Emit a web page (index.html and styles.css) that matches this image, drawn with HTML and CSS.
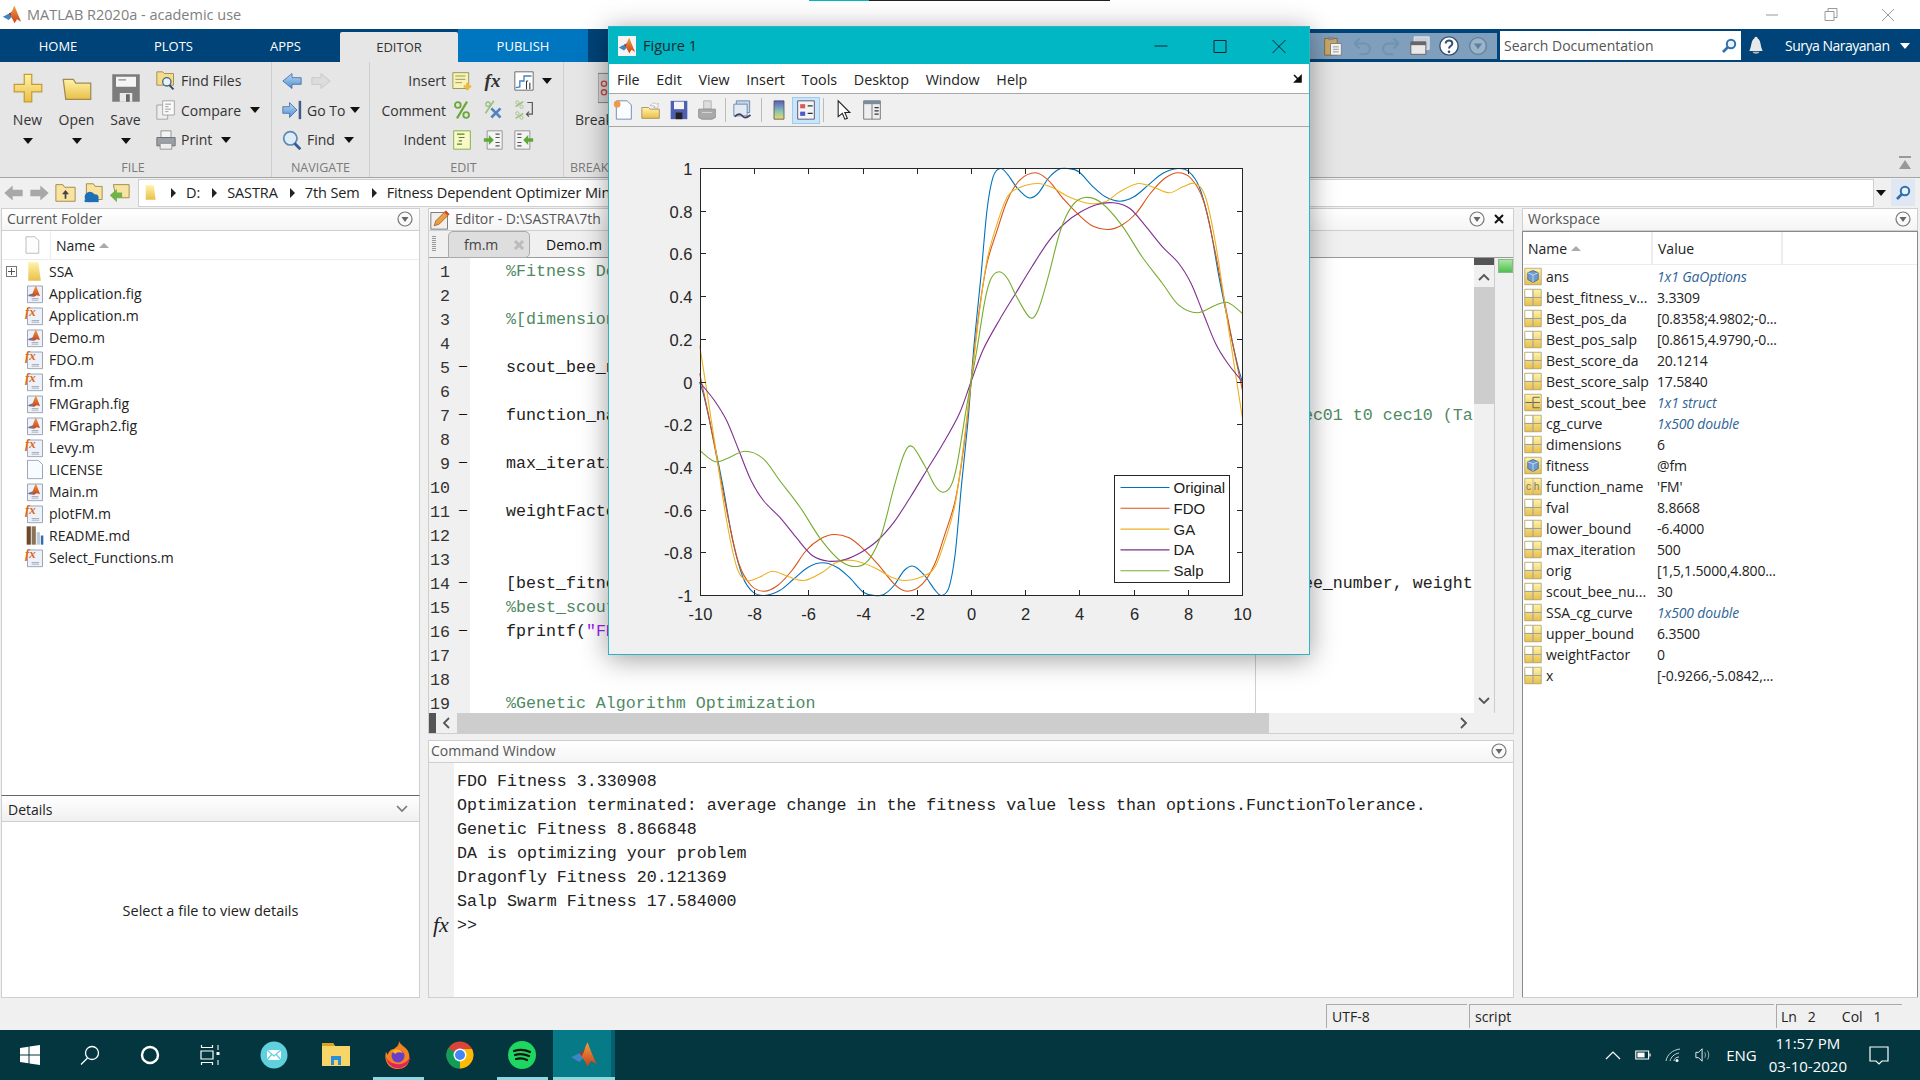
FILE: index.html
```html
<!DOCTYPE html>
<html>

<head>
    <title>MATLAB R2020a - academic use</title>
    <link rel="stylesheet" href="styles.css">
</head>

<body>
    <svg class="sprites" width="0" height="0">
        <defs>
            <linearGradient id="gradYellow" x1="0" y1="0" x2="0" y2="1">
                <stop offset="0" stop-color="#fff3a8" />
                <stop offset="1" stop-color="#e9bf4a" />
            </linearGradient>
            <linearGradient id="gradBlue" x1="0" y1="0" x2="0" y2="1">
                <stop offset="0" stop-color="#bcd8f4" />
                <stop offset="1" stop-color="#4f8fd0" />
            </linearGradient>
            <linearGradient id="gradMl" x1="0" y1="0" x2="0" y2="1">
                <stop offset="0" stop-color="#f0a040" />
                <stop offset="1" stop-color="#c8401a" />
            </linearGradient>
        </defs>
        <symbol id="ml" viewBox="0 0 24 24">
            <path d="M1 14l6-3 3-1 3 3-5 5z" fill="#3f84c4" />
            <path d="M15 1c2 5 5 13 8 19l-5-3-3 5c-1-3-3-6-5-9 2-3 3-9 5-12z" fill="url(#gradMl)" />
            <path d="M15 1c-2 3-3 9-5 12l-2-3 3-1c2-3 3-6 4-8z" fill="#a83818" />
        </symbol>
        <symbol id="plus" viewBox="0 0 24 24">
            <path d="M9 1h6v8h8v6h-8v8H9v-8H1V9h8z" fill="url(#gradYellow)" stroke="#c99a30" />
        </symbol>
        <symbol id="open" viewBox="0 0 24 24">
            <path d="M1 5h8l2 3h12v13H3z" fill="url(#gradYellow)" stroke="#a08a50" />
        </symbol>
        <symbol id="floppy" viewBox="0 0 24 24">
            <path d="M1 1h22v22H1z" fill="#7c7c7c" />
            <path d="M4 3h16v8H4z" fill="#f4f4f4" />
            <path d="M7 16h10v7H7z" fill="#e8e8e8" />
            <path d="M12 17h3v6h-3z" fill="#666" />
            <path d="M6 5h6v1H6z" fill="#888" />
        </symbol>
        <symbol id="findfiles" viewBox="0 0 24 24">
            <path d="M1 1h7l2 2h11v14H1z" fill="#f5dc8c" stroke="#9a8240" />
            <circle cx="13" cy="13" r="5" fill="#e8f2fb" stroke="#44678a" stroke-width="1.6" />
            <path d="M16 17l5 5" stroke="#2f4a68" stroke-width="2.4" />
        </symbol>
        <symbol id="compare" viewBox="0 0 24 24">
            <path d="M1 6h13v17H1z" fill="#eee" stroke="#999" />
            <path d="M8 1h14v17H8z" fill="#fafafa" stroke="#999" />
            <path d="M11 5h7M11 8h4M11 11h7M11 14h4" stroke="#888" />
        </symbol>
        <symbol id="printer" viewBox="0 0 24 24">
            <path d="M6 1h12v8H6z" fill="#f4f4f4" stroke="#888" />
            <path d="M1 9h22v10H1z" fill="#9aa0a8" stroke="#666" />
            <path d="M5 16h14v7H5z" fill="#eee" stroke="#888" />
        </symbol>
        <symbol id="back" viewBox="0 0 24 24">
            <path d="M1 12L12 3v5h11v8H12v5z" fill="url(#gradBlue)" stroke="#3f6fa8" />
        </symbol>
        <symbol id="fwdoff" viewBox="0 0 24 24">
            <path d="M23 12L12 3v5H1v8h11v5z" fill="#dcdcdc" stroke="#c4c4c4" />
        </symbol>
        <symbol id="goto" viewBox="0 0 24 24">
            <path d="M1 8h8V3l9 9-9 9v-5H1z" fill="url(#gradBlue)" stroke="#3f6fa8" />
            <path d="M20 1h3v22h-3z" fill="#3d5f8a" />
        </symbol>
        <symbol id="find" viewBox="0 0 24 24">
            <circle cx="10" cy="10" r="8" fill="#dcecfb" stroke="#5d88b4" stroke-width="2" />
            <path d="M15 16l7 7" stroke="#2f5f96" stroke-width="3.4" />
        </symbol>
        <symbol id="insert" viewBox="0 0 24 24">
            <path d="M1 2h19v19H1z" fill="#fbf1b4" stroke="#7d8f4e" />
            <path d="M4 6h12M4 10h12M4 14h8" stroke="#7d8f4e" />
            <path d="M17 14h3v3h3v3h-3v3h-3v-3h-3v-3h3z" fill="#ecb93a" />
        </symbol>
        <symbol id="fi" viewBox="0 0 24 24">
            <path d="M1 1h22v22H1z" fill="#fff" stroke="#555" />
            <path d="M2 20l5-1V12h5V6h9" fill="none" stroke="#3f84c4" stroke-width="1.6" />
            <path d="M15 12h2M15 12v10M19 14v8" stroke="#333" stroke-width="1.3" />
        </symbol>
        <symbol id="pctmark" viewBox="0 0 24 24">
            <circle cx="7" cy="6" r="3.4" fill="none" stroke="#6aa83a" stroke-width="2.2" />
            <circle cx="17" cy="18" r="3.4" fill="none" stroke="#6aa83a" stroke-width="2.2" />
            <path d="M18 2L6 22" stroke="#6aa83a" stroke-width="2.6" />
        </symbol>
        <symbol id="pctx" viewBox="0 0 24 24">
            <circle cx="6" cy="5" r="2.6" fill="none" stroke="#9cc080" stroke-width="1.6" />
            <path d="M13 1L3 16" stroke="#9cc080" stroke-width="2" />
            <path d="M10 10l11 11M21 10L10 21" stroke="#4f86c0" stroke-width="3.2" />
        </symbol>
        <symbol id="pctback" viewBox="0 0 24 24">
            <path d="M2 8l9-6M2 22l9-6" stroke="#9cc080" stroke-width="2" />
            <circle cx="4" cy="3" r="2" fill="none" stroke="#9cc080" />
            <circle cx="9" cy="8" r="2" fill="none" stroke="#9cc080" />
            <circle cx="4" cy="16" r="2" fill="none" stroke="#9cc080" />
            <circle cx="9" cy="21" r="2" fill="none" stroke="#9cc080" />
            <path d="M16 3h6v14h-7m3-3l-3 3 3 3" fill="none" stroke="#555" stroke-width="1.4" />
        </symbol>
        <symbol id="indent" viewBox="0 0 24 24">
            <path d="M2 1h20v22H2z" fill="#fbf7c8" stroke="#6aa83a" />
            <path d="M6 5h9M8 9h7M8 13h4M6 17h6" stroke="#4f8a2a" stroke-width="1.4" />
        </symbol>
        <symbol id="indentin" viewBox="0 0 24 24">
            <path d="M5 1h18v22H5z" fill="#f4f4f4" stroke="#888" />
            <path d="M15 5h5M15 9h5M15 15h5M15 19h5" stroke="#555" stroke-width="1.4" />
            <path d="M1 10h6V6l6 6-6 6v-4H1z" fill="#5ea83a" />
        </symbol>
        <symbol id="indentout" viewBox="0 0 24 24">
            <path d="M1 1h18v22H1z" fill="#f4f4f4" stroke="#888" />
            <path d="M4 5h5M4 9h5M4 15h5M4 19h5" stroke="#555" stroke-width="1.4" />
            <path d="M23 10h-6V6l-6 6 6 6v-4h6z" fill="#5ea83a" />
        </symbol>
        <symbol id="breakpt" viewBox="0 0 14 34">
            <path d="M0 0h14v34H0z" fill="#d4d4d4" stroke="#777" />
            <circle cx="7" cy="12" r="3" fill="none" stroke="#c44" stroke-width="1.6" />
            <circle cx="7" cy="22" r="3" fill="none" stroke="#c44" stroke-width="1.6" />
        </symbol>
        <symbol id="navback" viewBox="0 0 24 24">
            <path d="M1 12l10-9v5h12v8H11v5z" fill="#a8a8a8" />
        </symbol>
        <symbol id="navfwd" viewBox="0 0 24 24">
            <path d="M23 12L13 3v5H1v8h12v5z" fill="#a8a8a8" />
        </symbol>
        <symbol id="upfolder" viewBox="0 0 24 24">
            <path d="M1 3h8l2 3h12v16H1z" fill="#f8e4a0" stroke="#9a8240" />
            <path d="M12 9l4 5h-3v5h-2v-5H8z" fill="#444" />
        </symbol>
        <symbol id="browse" viewBox="0 0 24 24">
            <path d="M5 2h8l2 3h8v15H5z" fill="#f8e4a0" stroke="#9a8240" />
            <circle cx="9" cy="17" r="6" fill="#1f6fb2" />
            <circle cx="15" cy="18" r="4" fill="#1f6fb2" />
            <path d="M3 20h16v3H3z" fill="#1f6fb2" />
        </symbol>
        <symbol id="pickfolder" viewBox="0 0 24 24">
            <path d="M5 3h18v15H8z" fill="#f8e4a0" stroke="#9a8240" />
            <path d="M1 15l8-7v4h6v6H9v5z" fill="#6fb34a" />
        </symbol>
        <symbol id="tfolder" viewBox="0 0 24 24">
            <path d="M4 1h12l3 22H4z" fill="url(#gradYellow)" />
        </symbol>
        <symbol id="figdoc" viewBox="0 0 24 24">
            <path d="M3 3h18v20H3z" fill="#eef2f8" stroke="#8796ad" />
            <path d="M3 15l6-3 4-10 5 13-4-1-3 2z" fill="url(#gradMl)" />
            <path d="M3 14l6-2 1 3z" fill="#3f84c4" />
            <path d="M8 18h8M8 20h8" stroke="#9aa4b2" />
        </symbol>
        <symbol id="fxdoc" viewBox="0 0 24 24">
            <path d="M3 3h18v20H3z" fill="#eef2f8" stroke="#8796ad" />
            <path d="M8 18h9M8 20h9" stroke="#9aa4b2" />
        </symbol>
        <symbol id="plaindoc" viewBox="0 0 24 24">
            <path d="M3 1h13l5 5v17H3z" fill="#f8fbff" stroke="#8796ad" />
        </symbol>
        <symbol id="headdoc" viewBox="0 0 24 24">
            <path d="M4 1h12l5 5v17H4z" fill="#fdfdfd" stroke="#aaa" />
        </symbol>
        <symbol id="books" viewBox="0 0 24 24">
            <path d="M2 1h5v22H2z" fill="#6a4a2a" />
            <path d="M8 1h5v22H8z" fill="#8a7458" />
            <path d="M14 8h4v15h-4z" fill="#c0c8d4" />
            <path d="M19 12h3v11h-3z" fill="#2f6fb0" />
        </symbol>
        <symbol id="vargrid" viewBox="0 0 24 24">
            <path d="M1 1h22v22H1z" fill="url(#gradYellow)" stroke="#a09a70" />
            <path d="M2 2h9v9H2z" fill="#fff" />
            <path d="M12 1v22M1 12h22" stroke="#9aa0a8" stroke-width="1.4" />
        </symbol>
        <symbol id="varcube" viewBox="0 0 24 24">
            <path d="M1 1h22v22H1z" fill="url(#gradYellow)" stroke="#a09a70" />
            <path d="M12 4l7 3v9l-7 4-7-4V7z" fill="#6f9bd0" stroke="#3a5f8e" />
            <path d="M5 7l7 3 7-3M12 10v10" fill="none" stroke="#dce8f5" />
        </symbol>
        <symbol id="varstruct" viewBox="0 0 24 24">
            <path d="M1 1h22v22H1z" fill="url(#gradYellow)" stroke="#a09a70" />
            <path d="M2 12h9M12 5h9M12 12h9M12 19h9M12 5v14" fill="none" stroke="#666" stroke-width="1.4" />
        </symbol>
        <symbol id="varchar" viewBox="0 0 24 24">
            <path d="M1 1h22v22H1z" fill="url(#gradYellow)" stroke="#a09a70" />
            <path d="M12 1v22" stroke="#aaa" />
        </symbol>
        <symbol id="minibtn" viewBox="0 0 16 16">
            <circle cx="8" cy="8" r="7" fill="#fafafa" stroke="#777" stroke-width="1.2" />
            <path d="M4.5 6h7L8 11z" fill="#666" />
        </symbol>
        <symbol id="lens" viewBox="0 0 16 16">
            <circle cx="10" cy="6" r="4.2" fill="#e8f2fb" stroke="#2f6fb0" stroke-width="2" />
            <path d="M7 9l-5 5" stroke="#2f6fb0" stroke-width="2.6" />
        </symbol>
        <symbol id="tbnew" viewBox="0 0 24 24">
            <path d="M4 1h13l5 5v17H4z" fill="#fbfcff" stroke="#5a7ea6" />
            <circle cx="5" cy="5" r="4" fill="#ef9a4a" />
        </symbol>
        <symbol id="tbopen" viewBox="0 0 24 24">
            <path d="M1 9h8l2 2h11v11H1z" fill="url(#gradYellow)" stroke="#a08a50" />
            <path d="M11 7c2-4 6-4 8-2l2-1-1 6-5-1 2-1c-2-2-4-1-6-1z" fill="#f6f6f6" stroke="#999" stroke-width=".6" />
        </symbol>
        <symbol id="tbsave" viewBox="0 0 24 24">
            <path d="M2 1h20v22H2z" fill="#4f5fb0" />
            <path d="M6 2h12v9H6z" fill="#f4f4f4" />
            <path d="M8 15h8v8H8z" fill="#222" />
        </symbol>
        <symbol id="tbprint" viewBox="0 0 24 24">
            <path d="M8 1h9v10H8z" fill="#ddd" stroke="#aaa" />
            <path d="M2 11h20v10l-4 2H6l-4-2z" fill="#aaa" stroke="#888" />
            <path d="M6 15h12" stroke="#ddd" />
        </symbol>
        <symbol id="tblink" viewBox="0 0 24 24">
            <path d="M4 1h16v14H4z" fill="#c8d4e4" stroke="#5a7ea6" />
            <path d="M1 5h16v14H1z" fill="#e4eaf2" stroke="#5a7ea6" />
            <path d="M2 20c4-4 7-4 9-1s5 3 10-1" fill="none" stroke="#446" stroke-width="2" />
        </symbol>
        <symbol id="tbcolorbar" viewBox="0 0 24 24">
            <linearGradient id="gradBar" x1="0" y1="0" x2="0" y2="1">
                <stop offset="0" stop-color="#5a5ac8" />
                <stop offset=".6" stop-color="#8ac8b0" />
                <stop offset="1" stop-color="#f0d860" />
            </linearGradient>
            <path d="M6 1h12v22H6z" fill="url(#gradBar)" stroke="#555" />
        </symbol>
        <symbol id="tblegend" viewBox="0 0 24 24">
            <path d="M2 1h20v22H2z" fill="#f4f4f4" stroke="#446" />
            <path d="M5 5h6v5H5z" fill="#d85a5a" />
            <path d="M5 14h6v5H5z" fill="#4a5ac8" />
            <path d="M14 7h6M14 16h6" stroke="#333" stroke-width="1.6" />
        </symbol>
        <symbol id="tbcursor" viewBox="0 0 24 24">
            <path d="M5 1v19l5-4 3 7 3-1-3-7h6z" fill="#fff" stroke="#222" stroke-width="1.3" />
        </symbol>
        <symbol id="tbpanel" viewBox="0 0 24 24">
            <path d="M2 1h20v22H2z" fill="#eee" stroke="#666" />
            <path d="M2 1h20v4H2z" fill="#7a8ca0" />
            <path d="M12 5v18" stroke="#666" />
            <path d="M15 9h5M15 13h5M15 17h5" stroke="#333" stroke-width="1.5" />
        </symbol>
        <symbol id="clipboard" viewBox="0 0 24 24">
            <path d="M2 3h15v20H2z" fill="#c8a868" stroke="#7a6430" />
            <path d="M6 1h7v4H6z" fill="#888" />
            <path d="M9 9h13v14H9z" fill="#f4f4f4" stroke="#777" />
            <path d="M12 13h7M12 16h7M12 19h7" stroke="#888" />
        </symbol>
        <symbol id="undo" viewBox="0 0 24 24">
            <path d="M3 9h12a6 6 0 0 1 0 13H9M3 9l6-6M3 9l6 6" fill="none" stroke="#6f93b2" stroke-width="2.4" />
        </symbol>
        <symbol id="redo" viewBox="0 0 24 24">
            <path d="M21 9H9a6 6 0 0 0 0 13h6M21 9l-6-6M21 9l-6 6" fill="none" stroke="#6f93b2" stroke-width="2.4" />
        </symbol>
        <symbol id="windows" viewBox="0 0 24 24">
            <path d="M5 1h18v15H5z" fill="#c8d0da" stroke="#eee" />
            <path d="M1 7h18v15H1z" fill="#e8e8e8" stroke="#555" />
            <path d="M1 7h18v4H1z" fill="#666" />
        </symbol>
        <symbol id="helpq" viewBox="0 0 24 24">
            <circle cx="12" cy="12" r="11" fill="#fff" stroke="#33506e" stroke-width="1.6" />
            <path d="M8 9c0-5 8-5 8 0 0 3-4 3-4 6" fill="none" stroke="#33506e" stroke-width="2.4" />
            <circle cx="12" cy="19" r="1.6" fill="#33506e" />
        </symbol>
        <symbol id="qadown" viewBox="0 0 24 24">
            <circle cx="12" cy="12" r="10" fill="#9cb4ca" stroke="#5f7f9e" stroke-width="1.6" />
            <path d="M7 9h10l-5 7z" fill="#5f7f9e" />
        </symbol>
        <symbol id="bell" viewBox="0 0 24 24">
            <path d="M12 1c1 0 2 1 2 2 4 2 3 9 6 15H4c3-6 2-13 6-15 0-1 1-2 2-2z" fill="#e8e8e8" />
            <path d="M8 19h8c0 3-8 3-8 0z" fill="#bbb" />
        </symbol>
    </svg>

    <div class="sliver"><span class="sliver-teal"></span><span class="sliver-dark"></span></div>

    <div class="titlebar">
        <svg class="title-logo"><use href="#ml" /></svg>
        <span class="title-text">MATLAB R2020a - academic use</span>
        <div class="win-btns">
            <svg class="win-btn" viewBox="0 0 58 20"><path d="M23 10h12" stroke="#999" /></svg>
            <svg class="win-btn" viewBox="0 0 58 20"><path d="M24 6.500h9v9h-9zM27 6.500v-3h9v9h-3" fill="none" stroke="#999" /></svg>
            <svg class="win-btn" viewBox="0 0 58 20"><path d="M23 4l12 12M35 4L23 16" stroke="#999" /></svg>
        </div>
    </div>

    <div class="tabbar">
        <div class="tab tab-home">HOME</div>
        <div class="tab tab-plots">PLOTS</div>
        <div class="tab tab-apps">APPS</div>
        <div class="tab tab-editor">EDITOR</div>
        <div class="tab tab-publish">PUBLISH</div>
        <div class="quick">
            <svg class="qa"><use href="#clipboard" /></svg>
            <svg class="qa"><use href="#undo" /></svg>
            <svg class="qa"><use href="#redo" /></svg>
            <svg class="qa"><use href="#windows" /></svg>
            <svg class="qa"><use href="#helpq" /></svg>
            <svg class="qa"><use href="#qadown" /></svg>
        </div>
        <div class="search-doc">
            <span>Search Documentation</span>
            <svg class="lens"><use href="#lens" /></svg>
        </div>
        <svg class="bell"><use href="#bell" /></svg>
        <div class="account">Surya Narayanan</div>
        <span class="caret caret-white"></span>
    </div>

    <div class="ribbon">
        <section class="rib-sec sec-file">
            <div class="sec-body">
                <div class="big-btn"><svg class="big-icon"><use href="#plus" /></svg><span class="big-label">New</span><span class="caret"></span></div>
                <div class="big-btn"><svg class="big-icon"><use href="#open" /></svg><span class="big-label">Open</span><span class="caret"></span></div>
                <div class="big-btn"><svg class="big-icon"><use href="#floppy" /></svg><span class="big-label">Save</span><span class="caret"></span></div>
                <div class="rib-rows file-rows">
                    <div class="rib-row"><svg class="rib-icon"><use href="#findfiles" /></svg><span>Find Files</span></div>
                    <div class="rib-row"><svg class="rib-icon"><use href="#compare" /></svg><span>Compare</span><span class="caret caret-gap"></span></div>
                    <div class="rib-row"><svg class="rib-icon"><use href="#printer" /></svg><span>Print</span><span class="caret caret-gap"></span></div>
                </div>
            </div>
            <div class="sec-label">FILE</div>
        </section>
        <section class="rib-sec sec-nav">
            <div class="sec-body">
                <div class="rib-rows">
                    <div class="rib-row"><svg class="rib-icon"><use href="#back" /></svg><svg class="rib-icon fwd-icon"><use href="#fwdoff" /></svg></div>
                    <div class="rib-row"><svg class="rib-icon"><use href="#goto" /></svg><span>Go To</span><span class="caret"></span></div>
                    <div class="rib-row"><svg class="rib-icon"><use href="#find" /></svg><span>Find</span><span class="caret caret-gap"></span></div>
                </div>
            </div>
            <div class="sec-label">NAVIGATE</div>
        </section>
        <section class="rib-sec sec-edit">
            <div class="sec-body">
                <div class="edit-grid">
                    <span class="edit-label">Insert</span>
                    <svg class="rib-icon"><use href="#insert" /></svg>
                    <span class="fx-glyph">fx</span>
                    <svg class="rib-icon"><use href="#fi" /></svg>
                    <span class="caret"></span>
                    <span class="edit-label">Comment</span>
                    <svg class="rib-icon"><use href="#pctmark" /></svg>
                    <svg class="rib-icon"><use href="#pctx" /></svg>
                    <svg class="rib-icon"><use href="#pctback" /></svg>
                    <span></span>
                    <span class="edit-label">Indent</span>
                    <svg class="rib-icon"><use href="#indent" /></svg>
                    <svg class="rib-icon"><use href="#indentin" /></svg>
                    <svg class="rib-icon"><use href="#indentout" /></svg>
                    <span></span>
                </div>
            </div>
            <div class="sec-label">EDIT</div>
        </section>
        <section class="rib-sec sec-break">
            <div class="sec-body">
                <div class="big-btn break-btn"><svg class="break-icon"><use href="#breakpt" /></svg><span class="big-label">Break</span></div>
            </div>
            <div class="sec-label break-label">BREAK</div>
        </section>
        <svg class="collapse" viewBox="0 0 14 16"><path d="M1 1h12v2H1zM7 5l6 9H1z" fill="#999" /></svg>
    </div>

    <div class="addressbar">
        <svg class="nav-arrow"><use href="#navback" /></svg>
        <svg class="nav-arrow"><use href="#navfwd" /></svg>
        <svg class="nav-folder"><use href="#upfolder" /></svg>
        <svg class="nav-folder"><use href="#browse" /></svg>
        <svg class="nav-folder"><use href="#pickfolder" /></svg>
        <div class="pathbox">
            <svg class="path-folder"><use href="#tfolder" /></svg>
            <span class="path-sep"></span><span>D:</span>
            <span class="path-sep"></span><span>SASTRA</span>
            <span class="path-sep"></span><span>7th Sem</span>
            <span class="path-sep"></span><span>Fitness Dependent Optimizer Minimal</span>
        </div>
        <span class="caret path-caret"></span>
        <div class="path-search"><svg class="lens"><use href="#lens" /></svg></div>
    </div>

    <main class="desktop">
        <div class="col-left">
            <div class="panel folder-panel">
                <div class="panel-head"><span>Current Folder</span><svg class="mini"><use href="#minibtn" /></svg></div>
                <div class="folder-head">
                    <div class="fh-icon"><svg class="doc-head"><use href="#headdoc" /></svg></div>
                    <div class="fh-name">Name <span class="sort-up"></span></div>
                </div>
                <div class="file-list">
                    <div class="file-row"><span class="tree-col"><span class="plus-box"></span></span><svg class="file-icon"><use href="#tfolder" /></svg>SSA</div>
                    <div class="file-row"><span class="tree-col"></span><svg class="file-icon"><use href="#figdoc" /></svg>Application.fig</div>
                    <div class="file-row"><span class="tree-col"></span><span class="fx-file"><svg class="file-icon"><use href="#fxdoc" /></svg></span>Application.m</div>
                    <div class="file-row"><span class="tree-col"></span><svg class="file-icon"><use href="#figdoc" /></svg>Demo.m</div>
                    <div class="file-row"><span class="tree-col"></span><span class="fx-file"><svg class="file-icon"><use href="#fxdoc" /></svg></span>FDO.m</div>
                    <div class="file-row"><span class="tree-col"></span><span class="fx-file"><svg class="file-icon"><use href="#fxdoc" /></svg></span>fm.m</div>
                    <div class="file-row"><span class="tree-col"></span><svg class="file-icon"><use href="#figdoc" /></svg>FMGraph.fig</div>
                    <div class="file-row"><span class="tree-col"></span><svg class="file-icon"><use href="#figdoc" /></svg>FMGraph2.fig</div>
                    <div class="file-row"><span class="tree-col"></span><span class="fx-file"><svg class="file-icon"><use href="#fxdoc" /></svg></span>Levy.m</div>
                    <div class="file-row"><span class="tree-col"></span><svg class="file-icon"><use href="#plaindoc" /></svg>LICENSE</div>
                    <div class="file-row"><span class="tree-col"></span><svg class="file-icon"><use href="#figdoc" /></svg>Main.m</div>
                    <div class="file-row"><span class="tree-col"></span><span class="fx-file"><svg class="file-icon"><use href="#fxdoc" /></svg></span>plotFM.m</div>
                    <div class="file-row"><span class="tree-col"></span><svg class="file-icon"><use href="#books" /></svg>README.md</div>
                    <div class="file-row"><span class="tree-col"></span><span class="fx-file"><svg class="file-icon"><use href="#fxdoc" /></svg></span>Select_Functions.m</div>
                </div>
            </div>
            <div class="panel details-panel">
                <div class="details-head"><span>Details</span><svg class="chev" viewBox="0 0 12 8"><path d="M1 1l5 5 5-5" fill="none" stroke="#777" stroke-width="1.6" /></svg></div>
                <div class="details-body">Select a file to view details</div>
            </div>
        </div>

        <div class="col-mid">
            <div class="panel editor-panel">
                <div class="panel-head">
                    <svg class="pencil" viewBox="0 0 24 24"><path d="M1 3h20v20H1z" fill="#f0f0f0" stroke="#666" /><path d="M5 19l2-6L19 1l4 4-12 12z" fill="#e8a040" stroke="#b05a20" /><path d="M19 1l4 4-2 2-4-4z" fill="#d04a40" /></svg>
                    <span>Editor - D:\SASTRA\7th</span>
                    <svg class="mini head-mini"><use href="#minibtn" /></svg>
                    <svg class="close-x" viewBox="0 0 10 10"><path d="M1 1l8 8M9 1L1 9" stroke="#111" stroke-width="2" /></svg>
                </div>
                <div class="tabstrip">
                    <span class="grip"></span>
                    <div class="etab etab-off"><span>fm.m</span><svg class="etab-x" viewBox="0 0 12 12"><path d="M2 2l8 8M10 2l-8 8" stroke="#bbb" stroke-width="3" /></svg></div>
                    <div class="etab etab-on">Demo.m</div>
                </div>
                <div class="editor-body">
                    <div class="gutter">
                        <div class="gl"><span class="ln">1</span><span class="dash"></span></div>
                        <div class="gl"><span class="ln">2</span><span class="dash"></span></div>
                        <div class="gl"><span class="ln">3</span><span class="dash"></span></div>
                        <div class="gl"><span class="ln">4</span><span class="dash"></span></div>
                        <div class="gl"><span class="ln">5</span><span class="dash">&minus;</span></div>
                        <div class="gl"><span class="ln">6</span><span class="dash"></span></div>
                        <div class="gl"><span class="ln">7</span><span class="dash">&minus;</span></div>
                        <div class="gl"><span class="ln">8</span><span class="dash"></span></div>
                        <div class="gl"><span class="ln">9</span><span class="dash">&minus;</span></div>
                        <div class="gl"><span class="ln">10</span><span class="dash"></span></div>
                        <div class="gl"><span class="ln">11</span><span class="dash">&minus;</span></div>
                        <div class="gl"><span class="ln">12</span><span class="dash"></span></div>
                        <div class="gl"><span class="ln">13</span><span class="dash"></span></div>
                        <div class="gl"><span class="ln">14</span><span class="dash">&minus;</span></div>
                        <div class="gl"><span class="ln">15</span><span class="dash"></span></div>
                        <div class="gl"><span class="ln">16</span><span class="dash">&minus;</span></div>
                        <div class="gl"><span class="ln">17</span><span class="dash"></span></div>
                        <div class="gl"><span class="ln">18</span><span class="dash"></span></div>
                        <div class="gl"><span class="ln">19</span><span class="dash"></span></div>
                    </div>
                    <div class="code-col">
                        <div class="code">
                            <div class="cl"><span class="cm">%Fitness De</span></div>
                            <div class="cl"></div>
                            <div class="cl"><span class="cm">%[dimension</span></div>
                            <div class="cl"></div>
                            <div class="cl">scout_bee_nu</div>
                            <div class="cl"></div>
                            <div class="cl">function_na<span class="far cm">ec01 t0 cec10 (Ta</span></div>
                            <div class="cl"></div>
                            <div class="cl">max_iterati</div>
                            <div class="cl"></div>
                            <div class="cl">weightFacto</div>
                            <div class="cl"></div>
                            <div class="cl"></div>
                            <div class="cl">[best_fitne<span class="far">ee_number, weight</span></div>
                            <div class="cl"><span class="cm">%best_scout</span></div>
                            <div class="cl">fprintf(<span class="str">"FD</span></div>
                            <div class="cl"></div>
                            <div class="cl"></div>
                            <div class="cl"><span class="cm">%Genetic Algorithm Optimization</span></div>
                        </div>
                        <div class="print-margin"></div>
                    </div>
                    <div class="vscroll">
                        <div class="vs-mark"></div>
                        <svg class="vs-arrow" viewBox="0 0 12 8"><path d="M1 7l5-5 5 5" fill="none" stroke="#555" stroke-width="1.8" /></svg>
                        <div class="vs-thumb"></div>
                        <svg class="vs-arrow vs-down" viewBox="0 0 12 8"><path d="M1 1l5 5 5-5" fill="none" stroke="#555" stroke-width="1.8" /></svg>
                    </div>
                    <div class="analyzer"><div class="analyzer-ok"></div></div>
                </div>
                <div class="hscroll">
                    <div class="hs-mark"></div>
                    <svg class="hs-arrow" viewBox="0 0 8 12"><path d="M7 1L2 6l5 5" fill="none" stroke="#555" stroke-width="1.8" /></svg>
                    <div class="hs-thumb"></div>
                    <svg class="hs-arrow hs-right" viewBox="0 0 8 12"><path d="M1 1l5 5-5 5" fill="none" stroke="#555" stroke-width="1.8" /></svg>
                </div>
            </div>
            <div class="panel cmd-panel">
                <div class="panel-head"><span>Command Window</span><svg class="mini"><use href="#minibtn" /></svg></div>
                <div class="cmd-body">
                    <div class="cmd-gutter"><span class="cmd-fx">fx</span></div>
                    <div class="cmd-text">
                        <div class="cl">FDO Fitness 3.330908</div>
                        <div class="cl">Optimization terminated: average change in the fitness value less than options.FunctionTolerance.</div>
                        <div class="cl">Genetic Fitness 8.866848</div>
                        <div class="cl">DA is optimizing your problem</div>
                        <div class="cl">Dragonfly Fitness 20.121369</div>
                        <div class="cl">Salp Swarm Fitness 17.584000</div>
                        <div class="cl">&gt;&gt;</div>
                    </div>
                </div>
            </div>
        </div>

        <div class="panel workspace-panel">
            <div class="panel-head"><span>Workspace</span><svg class="mini"><use href="#minibtn" /></svg></div>
            <div class="ws-box">
                <div class="ws-head">
                    <div class="ws-hcell ws-hname">Name <span class="sort-up"></span></div>
                    <div class="ws-hcell ws-hval">Value</div>
                </div>
                <div class="ws-row"><svg class="ws-icon"><use href="#varcube" /></svg><span class="ws-name">ans</span><span class="ws-val ws-obj">1x1 GaOptions</span></div>
                <div class="ws-row"><svg class="ws-icon"><use href="#vargrid" /></svg><span class="ws-name">best_fitness_v...</span><span class="ws-val">3.3309</span></div>
                <div class="ws-row"><svg class="ws-icon"><use href="#vargrid" /></svg><span class="ws-name">Best_pos_da</span><span class="ws-val">[0.8358;4.9802;-0...</span></div>
                <div class="ws-row"><svg class="ws-icon"><use href="#vargrid" /></svg><span class="ws-name">Best_pos_salp</span><span class="ws-val">[0.8615,4.9790,-0...</span></div>
                <div class="ws-row"><svg class="ws-icon"><use href="#vargrid" /></svg><span class="ws-name">Best_score_da</span><span class="ws-val">20.1214</span></div>
                <div class="ws-row"><svg class="ws-icon"><use href="#vargrid" /></svg><span class="ws-name">Best_score_salp</span><span class="ws-val">17.5840</span></div>
                <div class="ws-row"><svg class="ws-icon"><use href="#varstruct" /></svg><span class="ws-name">best_scout_bee</span><span class="ws-val ws-obj">1x1 struct</span></div>
                <div class="ws-row"><svg class="ws-icon"><use href="#vargrid" /></svg><span class="ws-name">cg_curve</span><span class="ws-val ws-obj">1x500 double</span></div>
                <div class="ws-row"><svg class="ws-icon"><use href="#vargrid" /></svg><span class="ws-name">dimensions</span><span class="ws-val">6</span></div>
                <div class="ws-row"><svg class="ws-icon"><use href="#varcube" /></svg><span class="ws-name">fitness</span><span class="ws-val">@fm</span></div>
                <div class="ws-row"><span class="ch-var"><svg class="ws-icon"><use href="#varchar" /></svg></span><span class="ws-name">function_name</span><span class="ws-val">'FM'</span></div>
                <div class="ws-row"><svg class="ws-icon"><use href="#vargrid" /></svg><span class="ws-name">fval</span><span class="ws-val">8.8668</span></div>
                <div class="ws-row"><svg class="ws-icon"><use href="#vargrid" /></svg><span class="ws-name">lower_bound</span><span class="ws-val">-6.4000</span></div>
                <div class="ws-row"><svg class="ws-icon"><use href="#vargrid" /></svg><span class="ws-name">max_iteration</span><span class="ws-val">500</span></div>
                <div class="ws-row"><svg class="ws-icon"><use href="#vargrid" /></svg><span class="ws-name">orig</span><span class="ws-val">[1,5,1.5000,4.800...</span></div>
                <div class="ws-row"><svg class="ws-icon"><use href="#vargrid" /></svg><span class="ws-name">scout_bee_nu...</span><span class="ws-val">30</span></div>
                <div class="ws-row"><svg class="ws-icon"><use href="#vargrid" /></svg><span class="ws-name">SSA_cg_curve</span><span class="ws-val ws-obj">1x500 double</span></div>
                <div class="ws-row"><svg class="ws-icon"><use href="#vargrid" /></svg><span class="ws-name">upper_bound</span><span class="ws-val">6.3500</span></div>
                <div class="ws-row"><svg class="ws-icon"><use href="#vargrid" /></svg><span class="ws-name">weightFactor</span><span class="ws-val">0</span></div>
                <div class="ws-row"><svg class="ws-icon"><use href="#vargrid" /></svg><span class="ws-name">x</span><span class="ws-val">[-0.9266,-5.0842,...</span></div>
            </div>
        </div>
    </main>

    <div class="statusbar">
        <div class="st-cell st-enc">UTF-8</div>
        <div class="st-cell st-type">script</div>
        <div class="st-cell st-pos"><span>Ln&nbsp;&nbsp;&nbsp;2</span><span>Col&nbsp;&nbsp;&nbsp;1</span></div>
    </div>

    <footer class="taskbar">
        <div class="tb-slot tb-sys"><svg class="tb-icon" viewBox="0 0 20 20"><path d="M0 3l8.500-1.200V9.500H0zM9.500 1.600L20 0v9.500H9.500zM0 10.500h8.500v7.700L0 17zM9.500 10.500H20V20L9.500 18.400z" fill="#fff" /></svg></div>
        <div class="tb-slot tb-sys"><svg class="tb-icon" viewBox="0 0 20 20"><circle cx="12" cy="8" r="6.500" fill="none" stroke="#fff" stroke-width="1.300" /><path d="M7.500 13L1 19.500" stroke="#fff" stroke-width="1.300" /></svg></div>
        <div class="tb-slot tb-sys"><svg class="tb-icon" viewBox="0 0 20 20"><circle cx="10" cy="10" r="8" fill="none" stroke="#fff" stroke-width="2.400" /></svg></div>
        <div class="tb-slot tb-sys"><svg class="tb-icon" viewBox="0 0 20 20"><path d="M1.500 0v2.500h11V0M1.500 20v-2.500h11V20M1 6h12v8H1z" fill="none" stroke="#fff" stroke-width="1.200" /><path d="M18 0v5M18 15v5" stroke="#fff" /><path d="M16.500 7h3v3h-3z" fill="#fff" /></svg></div>
        <div class="tb-slot tb-app tb-mail"><svg class="tb-app-icon" viewBox="0 0 28 28"><circle cx="14" cy="14" r="13.500" fill="#5fd0dc" /><path d="M7 9h14v10H7z" fill="#fff" /><path d="M7 9l7 6 7-6M7 19l5-6M21 19l-5-6" fill="none" stroke="#5fd0dc" stroke-width="1.200" /></svg></div>
        <div class="tb-slot tb-app"><svg class="tb-app-icon" viewBox="0 0 28 28"><path d="M0 2h11l2 3h15v20H0z" fill="#f8d568" /><path d="M0 2h11l2 3H0z" fill="#d9a520" /><path d="M9 24v-9h10v9h-3v-5h-4v5z" fill="#2d8fd8" /></svg></div>
        <div class="tb-slot tb-app tb-running"><svg class="tb-app-icon" viewBox="0 0 28 28"><path d="M15 0c1 4 6 5 9 10 3 6 2 18-10 18C3 28 0 18 2 11l2 3c0-3 3-6 6-6 2-2 5-3 5-8z" fill="#f58220" /><path d="M2 16c1 8 8 12 14 11 6-1 10-6 10-11-3 6-9 8-14 7-5-1-9-4-10-7z" fill="#e0245e" /><circle cx="14" cy="15" r="6.500" fill="#6a3fc8" /><path d="M8 10c4-3 9-2 11 2-3-1-6-1-8 1z" fill="#ffb020" /></svg></div>
        <div class="tb-slot tb-app"><svg class="tb-app-icon" viewBox="0 0 28 28"><circle cx="14" cy="14" r="13.500" fill="#db4437" /><path d="M14 14L2.300 7A13.500 13.500 0 0 0 14 27.500z" fill="#0f9d58" /><path d="M14 14v13.500A13.500 13.500 0 0 0 26 8H14z" fill="#fbbc05" /><circle cx="14" cy="14" r="6.500" fill="#fff" /><circle cx="14" cy="14" r="5" fill="#4285f4" /></svg></div>
        <div class="tb-slot tb-app tb-running"><svg class="tb-app-icon" viewBox="0 0 28 28"><circle cx="14" cy="14" r="14" fill="#1ed760" /><path d="M6 10c6-2 11-1.500 16 1M7 14c5-1.500 9-1 14 1M8 18c4-1 8-.5 11 1" fill="none" stroke="#111" stroke-width="2.200" stroke-linecap="round" /></svg></div>
        <div class="tb-slot tb-app tb-active"><svg class="tb-app-icon"><use href="#ml" /></svg></div>
        <div class="tray">
            <svg class="tray-icon" viewBox="0 0 16 16"><path d="M1 12l7-7 7 7" fill="none" stroke="#fff" stroke-width="1.200" /></svg>
            <svg class="tray-icon" viewBox="0 0 20 14"><path d="M1 2h16v10H1z" fill="none" stroke="#fff" stroke-width="1.400" /><path d="M3 4h9v6H3z" fill="#fff" /><path d="M18 5h1.500v4H18z" fill="#fff" /></svg>
            <svg class="tray-icon" viewBox="0 0 16 16"><path d="M1 14C2 8 7 3 15 2M5 14c1-4 4-7 9-8M9 14c0-2 2-4 5-4" fill="none" stroke="#c8d4d8" /><circle cx="12" cy="13.500" r="1.500" fill="#fff" /></svg>
            <svg class="tray-icon" viewBox="0 0 18 16"><path d="M1 5h3l4-4v14l-4-4H1z" fill="none" stroke="#fff" /><path d="M11 5c1 2 1 4 0 6M14 3c2 3 2 7 0 10" fill="none" stroke="#aebcc0" /></svg>
            <span class="tray-lang">ENG</span>
            <div class="clock"><span>11:57 PM</span><span>03-10-2020</span></div>
            <svg class="tray-note" viewBox="0 0 20 20"><path d="M1 2h18v14h-6l-3 3-3-3H1z" fill="none" stroke="#fff" stroke-width="1.200" /></svg>
        </div>
    </footer>

    <!-- floating figure window -->
    <div class="figure-window">
        <div class="fig-title">
            <svg class="fig-logo"><use href="#ml" /></svg>
            <span>Figure 1</span>
            <div class="fig-btns">
                <svg class="fig-btn" viewBox="0 0 58 20"><path d="M23 10h13" stroke="#123" /></svg>
                <svg class="fig-btn" viewBox="0 0 58 20"><path d="M23.500 4.500h12v12h-12z" fill="none" stroke="#123" /></svg>
                <svg class="fig-btn" viewBox="0 0 58 20"><path d="M23 4l13 13M36 4L23 17" stroke="#123" /></svg>
            </div>
        </div>
        <div class="fig-menu">
            <span>File</span><span>Edit</span><span>View</span><span>Insert</span><span>Tools</span><span>Desktop</span><span>Window</span><span>Help</span>
            <svg class="dock" viewBox="0 0 10 10"><path d="M1 1l6 6M8 2v6H2z" stroke="#111" stroke-width="1.600" /></svg>
        </div>
        <div class="fig-tools">
            <svg class="ft"><use href="#tbnew" /></svg>
            <svg class="ft"><use href="#tbopen" /></svg>
            <svg class="ft"><use href="#tbsave" /></svg>
            <svg class="ft"><use href="#tbprint" /></svg>
            <span class="ft-sep"></span>
            <svg class="ft"><use href="#tblink" /></svg>
            <span class="ft-sep"></span>
            <svg class="ft"><use href="#tbcolorbar" /></svg>
            <span class="ft-on"><svg class="ft"><use href="#tblegend" /></svg></span>
            <span class="ft-sep"></span>
            <svg class="ft"><use href="#tbcursor" /></svg>
            <svg class="ft"><use href="#tbpanel" /></svg>
        </div>
        <div class="fig-body"><svg id="plot" width="700" height="526"></svg></div>
    </div>

    <script src="plot.js"></script>
</body>

</html>
```

FILE: styles.css
```css
* {
    box-sizing: border-box;
}

body {
    margin: 0;
    width: 1920px;
    height: 1080px;
    overflow: hidden;
    position: relative;
    display: flex;
    flex-direction: column;
    background-color: #f0f0f0;
    font-family: "Open Sans", "Liberation Sans", sans-serif;
    font-size: 14px;
    color: #222;
}

.sprites {
    position: absolute;
}

.sliver {
    position: absolute;
    top: 0;
    left: 809px;
    display: flex;
    height: 1px;
}

.sliver-teal {
    width: 60px;
    background-color: #00b7c3;
}

.sliver-dark {
    width: 241px;
    background-color: #222;
}

/* title bar */
.titlebar {
    height: 29px;
    background-color: #fff;
    display: flex;
    align-items: center;
    padding-left: 2px;
    flex-shrink: 0;
}

.title-logo {
    width: 20px;
    height: 22px;
}

.title-text {
    margin-left: 5px;
    font-size: 14.5px;
    color: #808080;
}

.win-btns {
    margin-left: auto;
    display: flex;
    padding-right: 3px;
}

.win-btn {
    width: 58px;
    height: 20px;
}

/* ribbon tabs */
.tabbar {
    height: 33px;
    background-color: #004378;
    display: flex;
    align-items: center;
    flex-shrink: 0;
    color: #fff;
    font-size: 13px;
    padding-right: 10px;
}

.tab {
    height: 33px;
    display: flex;
    align-items: center;
    justify-content: center;
    padding-top: 1px;
}

.tab-home {
    width: 116px;
}

.tab-plots {
    width: 115px;
}

.tab-apps {
    width: 109px;
}

.tab-editor {
    width: 118px;
    height: 30px;
    margin-top: 3px;
    padding-top: 0;
    background-color: #e6e6e6;
    color: #333;
    border-radius: 2px 2px 0 0;
}

.tab-publish {
    width: 130px;
    background-color: #0076c0;
}

.quick {
    margin-left: auto;
    width: 188px;
    height: 26px;
    background-color: #7f9fbc;
    display: flex;
    align-items: center;
    padding-left: 14px;
    gap: 9px;
}

.qa {
    width: 20px;
    height: 20px;
}

.search-doc {
    width: 241px;
    height: 29px;
    margin-left: 3px;
    background-color: #fff;
    color: #555;
    font-size: 14px;
    display: flex;
    align-items: center;
    justify-content: space-between;
    padding: 0 4px;
}

.lens {
    width: 16px;
    height: 16px;
}

.bell {
    width: 20px;
    height: 24px;
    margin-left: 5px;
}

.account {
    margin-left: 19px;
    font-size: 14px;
    letter-spacing: -.5px;
    width: 113px;
    white-space: nowrap;
}

.caret {
    display: inline-block;
    width: 0;
    height: 0;
    border-top: 6px solid #111;
    border-left: 5px solid transparent;
    border-right: 5px solid transparent;
}

.caret-white {
    border-top-color: #fff;
    margin-left: 2px;
}

.caret-gap {
    margin-left: 4px;
}

/* ribbon */
.ribbon {
    height: 116px;
    background-color: #e6e6e6;
    border-bottom: 1px solid #a5a5a5;
    display: flex;
    flex-shrink: 0;
    position: relative;
    color: #333;
}

.rib-sec {
    display: flex;
    flex-direction: column;
    border-right: 1px solid #cfcfcf;
}

.sec-file {
    width: 272px;
}

.sec-file .sec-label {
    padding-right: 5px;
}

.sec-nav {
    width: 98px;
}

.sec-edit {
    width: 194px;
}

.sec-edit .sec-label {
    padding-right: 6px;
}

.sec-break {
    width: 120px;
    border-right: none;
}

.sec-body {
    flex: 1;
    display: flex;
    padding-top: 4px;
    min-height: 0;
}

.sec-file .sec-body {
    padding-left: 3px;
}

.sec-nav .sec-body {
    padding-left: 10px;
}

.sec-label {
    height: 19px;
    text-align: center;
    font-size: 12.5px;
    color: #7a7a7a;
    line-height: 19px;
}

.break-label {
    text-align: left;
    padding-left: 6px;
}

.big-btn {
    width: 49px;
    display: flex;
    flex-direction: column;
    align-items: center;
    padding-top: 6px;
}

.big-icon {
    width: 30px;
    height: 32px;
    flex-shrink: 0;
}

.big-label {
    margin-top: 6px;
    line-height: 20px;
    font-size: 14px;
}

.big-btn .caret {
    margin-top: 8px;
}

.break-btn {
    width: 100px;
    padding-left: 11px;
    align-items: flex-start;
}

.break-icon {
    width: 12px;
    height: 32px;
    margin-left: 23px;
    flex-shrink: 0;
}

.rib-rows {
    display: grid;
    grid-auto-rows: 29.500px;
}

.file-rows {
    margin-left: 6px;
}

.rib-row {
    display: flex;
    align-items: center;
    gap: 5px;
    white-space: nowrap;
}

.rib-icon {
    width: 20px;
    height: 20px;
    flex-shrink: 0;
}

.fwd-icon {
    margin-left: 4px;
}

.edit-grid {
    display: grid;
    grid-template-columns: 76px 31px 31px 31px 15px;
    grid-auto-rows: 29.500px;
    align-items: center;
    justify-items: center;
}

.edit-label {
    justify-self: end;
}

.fx-glyph {
    font-family: "Liberation Serif", serif;
    font-style: italic;
    font-weight: bold;
    font-size: 19px;
    color: #333;
}

.collapse {
    position: absolute;
    right: 8px;
    bottom: 6px;
    width: 14px;
    height: 16px;
}

/* address bar */
.addressbar {
    height: 29px;
    background-color: #f0f0f0;
    display: flex;
    align-items: center;
    padding-left: 3px;
    flex-shrink: 0;
}

.nav-arrow {
    width: 21px;
    height: 20px;
    margin-right: 5px;
}

.nav-folder {
    width: 21px;
    height: 21px;
    margin-right: 6px;
}

.nav-folder:first-of-type {
    margin-left: 4px;
}

.pathbox {
    width: 1736px;
    height: 28px;
    margin-left: 2px;
    background-color: #fff;
    border: 1px solid #cfcfcf;
    display: flex;
    align-items: center;
    padding-left: 4px;
    white-space: nowrap;
    color: #222;
    font-size: 14.5px;
    letter-spacing: -.1px;
}

.path-folder {
    width: 16px;
    height: 19px;
    margin-right: 12px;
}

.path-sep {
    width: 0;
    height: 0;
    margin-right: 10px;
    border-left: 5px solid #222;
    border-top: 5px solid transparent;
    border-bottom: 5px solid transparent;
}

.pathbox span:not(.path-sep) {
    margin-right: 12px;
}

.path-caret {
    margin-left: 2px;
}

.path-search {
    width: 24px;
    height: 27px;
    margin-left: 5px;
    background-color: #dfe8f2;
    display: flex;
    align-items: center;
    justify-content: center;
}

/* docked panels */
.desktop {
    flex: 1;
    min-height: 0;
    display: flex;
    padding: 1px 0 0 1px;
    gap: 8px;
}

.panel {
    background-color: #fff;
    border: 1px solid #cfcfcf;
    display: flex;
    flex-direction: column;
    min-height: 0;
}

.panel-head {
    height: 22px;
    flex-shrink: 0;
    background: linear-gradient(#fff, #f5f5f5);
    border-bottom: 1px solid #cfcfcf;
    display: flex;
    align-items: center;
    padding: 0 6px 2px 5px;
    color: #555;
    white-space: nowrap;
    overflow: hidden;
}

.mini {
    width: 16px;
    height: 16px;
    margin-left: auto;
    flex-shrink: 0;
}

.col-left {
    width: 419px;
    display: flex;
    flex-direction: column;
    flex-shrink: 0;
}

.folder-panel {
    flex: 1;
    border-bottom: none;
}

.folder-head {
    height: 29px;
    display: flex;
    background-color: #fff;
    border-bottom: 1px solid #ececec;
    flex-shrink: 0;
}

.fh-icon {
    width: 49px;
    border-right: 1px solid #ececec;
    display: flex;
    align-items: center;
    justify-content: center;
    padding-left: 12px;
}

.doc-head {
    width: 18px;
    height: 22px;
}

.fh-name {
    padding-left: 5px;
    display: flex;
    align-items: center;
    gap: 4px;
}

.sort-up {
    display: inline-block;
    width: 0;
    height: 0;
    border-bottom: 5px solid #aaa;
    border-left: 5px solid transparent;
    border-right: 5px solid transparent;
}

.file-row {
    height: 22px;
    display: flex;
    align-items: center;
    white-space: nowrap;
}

.tree-col {
    width: 23px;
    flex-shrink: 0;
    padding-left: 4px;
    display: flex;
}

.plus-box {
    width: 11px;
    height: 11px;
    border: 1px solid #777;
    background: linear-gradient(#555, #555) center / 7px 1px no-repeat, linear-gradient(#555, #555) center / 1px 7px no-repeat;
}

.file-icon {
    width: 20px;
    height: 23px;
    margin-right: 4px;
    flex-shrink: 0;
    display: block;
}

/* the fx mark sits on the corner of the function file icon */
.fx-file {
    position: relative;
    flex-shrink: 0;
}

.fx-file::after {
    content: "fx";
    position: absolute;
    left: 0;
    top: 1px;
    font-family: "Liberation Serif", serif;
    font-style: italic;
    font-weight: bold;
    font-size: 13px;
    line-height: 14px;
    color: #d96a1a;
}

.details-panel {
    height: 203px;
    border-top: 1px solid #666;
}

.details-head {
    height: 26px;
    flex-shrink: 0;
    background: linear-gradient(#fff, #f0f0f0);
    border-bottom: 1px solid #cfcfcf;
    display: flex;
    align-items: center;
    justify-content: space-between;
    padding: 1px 11px 0 6px;
}

.chev {
    width: 12px;
    height: 8px;
}

.details-body {
    flex: 1;
    display: flex;
    align-items: center;
    justify-content: center;
    padding-top: 2px;
    font-size: 14.500px;
}

.col-mid {
    width: 1086px;
    display: flex;
    flex-direction: column;
    gap: 6px;
    flex-shrink: 0;
}

.editor-panel {
    height: 526px;
}

.pencil {
    width: 20px;
    height: 20px;
    margin: 2px 5px 0 -4px;
    flex-shrink: 0;
}

.head-mini {
    margin-right: 9px;
}

.close-x {
    width: 10px;
    height: 10px;
    margin-right: 3px;
    flex-shrink: 0;
}

.tabstrip {
    height: 27px;
    background-color: #f0f0f0;
    border-bottom: 1px solid #9a9a9a;
    display: flex;
    padding-left: 3px;
    flex-shrink: 0;
}

.grip {
    width: 4px;
    margin: 5px 12px 5px 0;
    background: repeating-linear-gradient(#999 0 1px, transparent 1px 2px);
}

.etab {
    height: 27px;
    display: flex;
    align-items: center;
}

.etab-off {
    width: 82px;
    background-color: #dedede;
    border: 1px solid #aaa;
    border-radius: 5px 5px 5px 0;
    padding-left: 15px;
    justify-content: space-between;
    padding-right: 4px;
    color: #444;
}

.etab-x {
    width: 12px;
    height: 12px;
}

.etab-on {
    padding-left: 16px;
    color: #111;
}

.editor-body {
    flex: 1;
    min-height: 0;
    display: flex;
    overflow: hidden;
}

.gutter {
    width: 41px;
    background-color: #f0f0f0;
    padding-top: 2px;
    flex-shrink: 0;
}

.gl {
    height: 24px;
    display: flex;
    align-items: center;
    font-family: "Liberation Mono", monospace;
    font-size: 16.650px;
    color: #333;
}

.ln {
    width: 21px;
    text-align: right;
}

.dash {
    margin-left: 8px;
    color: #111;
    line-height: 1;
}

.code-col {
    flex: 1;
    min-width: 0;
    position: relative;
    padding: 2px 0 0 36px;
    overflow: hidden;
}

.cl {
    height: 24px;
    line-height: 24px;
    font-family: "Liberation Mono", monospace;
    font-size: 16.650px;
    white-space: pre;
    color: #222;
}

.cm {
    color: #4f8a63;
}

.str {
    color: #a020f0;
}

/* what is left of a long line on the far side of the figure window */
.far {
    margin-left: 68.800ch;
}

.print-margin {
    position: absolute;
    top: 0;
    bottom: 0;
    left: 785px;
    width: 1px;
    background-color: #cfcfcf;
}

.vscroll {
    width: 20px;
    background-color: #f0f0f0;
    position: relative;
    flex-shrink: 0;
}

.vs-mark {
    height: 7px;
    background-color: #555;
}

.vs-arrow {
    display: block;
    width: 12px;
    height: 8px;
    margin: 8px auto 6px;
}

.vs-thumb {
    height: 117px;
    background-color: #cdcdcd;
}

.vs-down {
    position: absolute;
    bottom: 8px;
    left: 4px;
    margin: 0;
}

.analyzer {
    width: 19px;
    background-color: #f0f0f0;
    border-left: 1px solid #ccc;
    padding: 1px 0 0 3px;
    flex-shrink: 0;
}

.analyzer-ok {
    width: 15px;
    height: 14px;
    background: linear-gradient(#a8e6a0, #4fc050);
    border: 1px solid #8ab88a;
}

.hscroll {
    height: 20px;
    flex-shrink: 0;
    background-color: #f0f0f0;
    display: flex;
    align-items: center;
    position: relative;
}

.hs-mark {
    width: 7px;
    height: 100%;
    background-color: #555;
}

.hs-arrow {
    width: 8px;
    height: 12px;
    margin: 0 7px 0 6px;
}

.hs-thumb {
    width: 812px;
    height: 100%;
    background-color: #cdcdcd;
}

.hs-right {
    position: absolute;
    left: 1031px;
    margin: 0;
}

.cmd-panel {
    flex: 1;
}

.cmd-panel .panel-head {
    padding-left: 2px;
}

.cmd-body {
    flex: 1;
    display: flex;
    min-height: 0;
}

.cmd-gutter {
    width: 25px;
    background-color: #f0f0f0;
    position: relative;
    flex-shrink: 0;
}

.cmd-fx {
    position: absolute;
    top: 150px;
    left: 4px;
    font-family: "Liberation Serif", serif;
    font-style: italic;
    font-size: 22px;
    line-height: 24px;
    color: #222;
}

.cmd-text {
    padding: 7px 0 0 3px;
}

.workspace-panel {
    width: 396px;
    flex-shrink: 0;
    border-color: #cfcfcf;
}

.ws-box {
    flex: 1;
    border: 1px solid #8a8a8a;
    border-bottom: none;
    margin: 0 -1px 0 -1px;
    padding: 0;
}

.ws-head {
    height: 33px;
    display: flex;
    border-bottom: 1px solid #ececec;
    margin-bottom: 1px;
}

.ws-hcell {
    display: flex;
    align-items: center;
    gap: 4px;
    width: 130px;
    border-right: 2px solid #ececec;
}

.ws-hname {
    padding-left: 5px;
}

.ws-hval {
    padding-left: 5px;
}

.ws-row {
    height: 21px;
    display: flex;
    align-items: center;
    white-space: nowrap;
}

.ws-icon {
    width: 18px;
    height: 19px;
    margin-left: 1px;
    flex-shrink: 0;
    display: block;
}

.ch-var {
    position: relative;
    flex-shrink: 0;
}

.ch-var::after {
    content: "c h";
    position: absolute;
    left: 3px;
    top: 3px;
    font-family: "Liberation Sans", sans-serif;
    font-size: 10px;
    line-height: 13px;
    color: #777;
}

.ws-name {
    width: 115px;
    margin-left: 4px;
    flex-shrink: 0;
}

.ws-val {
    margin-left: -4px;
    letter-spacing: -.15px;
}

.ws-obj {
    font-style: italic;
    color: #2f6496;
}

/* status bar */
.statusbar {
    height: 32px;
    flex-shrink: 0;
    display: flex;
    align-items: flex-end;
    padding-left: 1326px;
    padding-bottom: 2px;
    gap: 2px;
}

.st-cell {
    height: 24px;
    border-top: 1px solid #aaa;
    border-left: 1px solid #aaa;
    display: flex;
    align-items: center;
    padding-left: 5px;
}

.st-enc {
    width: 141px;
}

.st-type {
    width: 305px;
}

.st-pos {
    width: 126px;
    gap: 26px;
    padding-left: 4px;
}

/* windows taskbar */
.taskbar {
    height: 50px;
    flex-shrink: 0;
    background-color: #04363f;
    display: flex;
    align-items: stretch;
    color: #fff;
}

.tb-slot {
    display: flex;
    align-items: center;
    justify-content: center;
    position: relative;
}

.tb-sys {
    width: 60px;
}

.tb-icon {
    width: 20px;
    height: 20px;
}

.tb-app {
    width: 62px;
}

.tb-mail {
    margin-left: 3px;
}

.tb-app-icon {
    width: 28px;
    height: 28px;
}

.tb-running::after {
    content: "";
    position: absolute;
    left: 6px;
    right: 5px;
    bottom: 0;
    height: 3px;
    background-color: #8fd8e0;
}

.tb-active {
    background-color: #067a87;
    border-right: 4px solid #055f6c;
}

.tb-active .tb-app-icon {
    margin-left: 4px;
}

.tb-active::after {
    content: "";
    position: absolute;
    left: 0;
    right: -4px;
    bottom: 0;
    height: 3px;
    background-color: #8fd8e0;
}

.tray {
    margin-left: auto;
    display: flex;
    align-items: center;
    padding-right: 31px;
}

.tray-icon {
    width: 16px;
    height: 16px;
    margin-right: 14px;
}

.tray-lang {
    font-size: 15px;
    margin-left: 1px;
    margin-right: 12px;
}

.clock {
    display: flex;
    flex-direction: column;
    align-items: center;
    font-size: 15px;
    line-height: 23px;
    margin-right: 22px;
}

.tray-note {
    width: 20px;
    height: 20px;
}

/* figure window, floats over the desktop */
.figure-window {
    position: absolute;
    left: 608px;
    top: 26px;
    width: 702px;
    height: 629px;
    border: 1px solid #2cb4c2;
    box-shadow: 0 4px 26px rgba(0, 0, 0, .38);
    background-color: #f0f0f0;
    display: flex;
    flex-direction: column;
}

.fig-title {
    height: 37px;
    background-color: #00b7c3;
    display: flex;
    align-items: center;
    padding-left: 9px;
    font-size: 14.500px;
    color: #1a2a30;
    flex-shrink: 0;
}

.fig-logo {
    width: 18px;
    height: 20px;
    margin-right: 7px;
    background-color: #f4f4f4;
}

.fig-btns {
    margin-left: auto;
    display: flex;
    padding-right: 1px;
}

.fig-btn {
    width: 59px;
    height: 20px;
}

.fig-menu {
    height: 30px;
    background-color: #fff;
    border-bottom: 1px solid #a8a8a8;
    display: flex;
    align-items: center;
    padding: 1px 0 0 8px;
    gap: 16.700px;
    font-size: 14.300px;
    color: #222;
    flex-shrink: 0;
}

.dock {
    width: 10px;
    height: 10px;
    margin-left: auto;
    margin-right: 6px;
}

.fig-tools {
    height: 33px;
    background-color: #f0f0f0;
    border-bottom: 1px solid #a8a8a8;
    display: flex;
    align-items: center;
    padding-left: 4px;
    flex-shrink: 0;
}

.ft {
    width: 20px;
    height: 24px;
    margin-right: 8px;
    display: block;
}

.ft-sep {
    width: 1px;
    height: 24px;
    background-color: #bbb;
    margin-right: 7px;
}

.ft-on {
    width: 28px;
    height: 27px;
    margin-left: -5px;
    margin-right: 3px;
    background-color: #cce4f7;
    border: 1px solid #99ccee;
    display: flex;
    align-items: center;
    justify-content: center;
}

.ft-on .ft {
    margin: 0;
}

.ft-on+.ft-sep {
    margin-right: 10px;
}

.fig-body {
    flex: 1;
    min-height: 0;
    overflow: hidden;
}

#plot {
    display: block;
    font-family: "Liberation Sans", Arial, sans-serif;
}
```

FILE: plot.js
```js
// draws the figure: axes, five curves and the legend
const svgNS = 'http://www.w3.org/2000/svg';
const plot = document.getElementById('plot');

const left = 91.5, top_ = 41.5, w = 542, h = 427;

// curves are odd about the origin, so only the right half is listed.
// units: axes box is 1328 wide and 1281 high, measured from its top left
const right = {
    Original: [[663, 640], [672, 505], [687, 325], [702, 125], [717, 25], [735, 0], [752, 17], [777, 60], [804, 88], [827, 75], [852, 30], [877, 3], [899, 0], [927, 10], [962, 55], [992, 85], [1027, 98], [1062, 85], [1097, 50], [1132, 15], [1170, 0], [1197, 10], [1222, 55], [1247, 165], [1272, 335], [1297, 485], [1317, 595], [1328, 640]],
    FDO: [[663, 640], [682, 435], [702, 285], [727, 185], [752, 95], [782, 35], [820, 13], [852, 35], [892, 95], [932, 145], [962, 173], [999, 183], [1032, 170], [1067, 135], [1102, 75], [1137, 30], [1170, 13], [1202, 30], [1232, 95], [1257, 225], [1282, 385], [1307, 545], [1328, 666]],
    GA: [[663, 640], [682, 445], [702, 275], [727, 165], [752, 85], [782, 57], [827, 45], [862, 57], [902, 85], [952, 105], [992, 100], [1027, 70], [1072, 45], [1112, 57], [1149, 73], [1182, 55], [1212, 45], [1237, 85], [1262, 225], [1287, 425], [1312, 625], [1328, 750]],
    DA: [[663, 640], [692, 545], [732, 455], [772, 375], [812, 295], [852, 220], [892, 165], [932, 130], [972, 108], [1012, 103], [1052, 120], [1092, 175], [1132, 235], [1172, 285], [1202, 345], [1232, 435], [1262, 525], [1292, 585], [1328, 640]],
    Salp: [[663, 640], [677, 545], [697, 395], [712, 330], [732, 310], [752, 330], [777, 390], [807, 447], [827, 425], [852, 325], [882, 185], [912, 110], [942, 87], [982, 103], [1032, 170], [1082, 265], [1132, 345], [1172, 410], [1217, 433], [1262, 410], [1292, 402], [1328, 435]]
};

const colors = { Original: '#0072bd', FDO: '#d95319', GA: '#edb120', DA: '#7e2f8e', Salp: '#77ac30' };

function el(name, attrs, text) {
    const node = document.createElementNS(svgNS, name);
    for (const key in attrs) node.setAttribute(key, attrs[key]);
    if (text !== undefined) node.textContent = text;
    plot.appendChild(node);
    return node;
}

function scale(p) {
    return [left + p[0] * w / 1328, top_ + p[1] * h / 1281];
}

// catmull-rom through the points, written out as cubic beziers
function smooth(points) {
    let d = 'M' + points[0][0].toFixed(1) + ' ' + points[0][1].toFixed(1);
    for (let i = 0; i < points.length - 1; i++) {
        const p0 = points[Math.max(i - 1, 0)];
        const p1 = points[i];
        const p2 = points[i + 1];
        const p3 = points[Math.min(i + 2, points.length - 1)];
        const c1 = [p1[0] + (p2[0] - p0[0]) / 6, p1[1] + (p2[1] - p0[1]) / 6];
        const c2 = [p2[0] - (p3[0] - p1[0]) / 6, p2[1] - (p3[1] - p1[1]) / 6];
        d += ' C' + c1[0].toFixed(1) + ' ' + c1[1].toFixed(1) + ' ' + c2[0].toFixed(1) + ' ' + c2[1].toFixed(1) + ' ' + p2[0].toFixed(1) + ' ' + p2[1].toFixed(1);
    }
    return d;
}

el('rect', { x: left, y: top_, width: w, height: h, fill: '#fff' });

for (const name in right) {
    const half = right[name];
    const mirrored = half.slice(1).map(p => [1326 - p[0], 1281 - p[1]]).reverse();
    const pts = mirrored.concat(half).map(scale);
    el('path', { d: smooth(pts), fill: 'none', stroke: colors[name], 'stroke-width': 1.1 });
}

el('rect', { x: left, y: top_, width: w, height: h, fill: 'none', stroke: '#262626' });

const tick = 5.5;
for (let i = 0; i <= 10; i++) {
    const x = Math.round(left + i * w / 10 - 0.5) + 0.5;
    const y = Math.round(top_ + i * h / 10 - 0.5) + 0.5;
    el('path', { d: `M${x} ${top_ + h}v${-tick}M${x} ${top_}v${tick}`, stroke: '#262626', fill: 'none' });
    el('path', { d: `M${left} ${y}h${tick}M${left + w} ${y}h${-tick}`, stroke: '#262626', fill: 'none' });
    el('text', { x: x, y: top_ + h + 24, 'text-anchor': 'middle', 'font-size': 16.5, fill: '#262626' }, String(-10 + i * 2));
    const v = 1 - i * 0.2;
    const label = Math.abs(v) < 1e-9 ? '0' : String(Number(v.toFixed(1)));
    el('text', { x: left - 8, y: y + 6, 'text-anchor': 'end', 'font-size': 16.5, fill: '#262626' }, label);
}

// legend, lower right inside the axes
const lx = 505.5, ly = 348.5;
el('rect', { x: lx, y: ly, width: 115, height: 107, fill: '#fff', stroke: '#262626' });
Object.keys(colors).forEach((name, i) => {
    const y = ly + 12 + i * 20.8;
    el('path', { d: `M${lx + 6} ${y}h49`, stroke: colors[name], fill: 'none', 'stroke-width': 1.1 });
    el('text', { x: lx + 59, y: y + 5.5, 'font-size': 15, fill: '#1a1a1a' }, name);
});
```
